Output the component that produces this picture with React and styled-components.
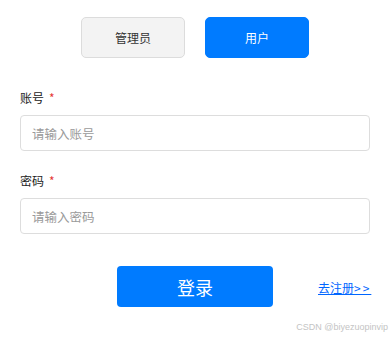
import React, { useState } from 'react';
import styled, { createGlobalStyle } from 'styled-components';

const GlobalStyle = createGlobalStyle`
  body {
    margin: 0;
    background: #fff;
    font-family: "Noto Sans CJK SC", "Noto Sans", sans-serif;
  }
`;

const Page = styled.div`
  position: relative;
  width: 390px;
  height: 339px;
  box-sizing: border-box;
  padding: 17px 20px 0;
`;

const RoleRow = styled.div`
  display: flex;
  justify-content: center;
  gap: 20px;
`;

const RoleButton = styled.button`
  width: 104px;
  height: 41px;
  border-radius: 5px;
  border: 1px solid ${p => (p.active ? '#007bff' : '#dcdcdc')};
  background: ${p => (p.active ? '#007bff' : '#f3f3f3')};
  color: ${p => (p.active ? '#fff' : '#333')};
  font-family: inherit;
  font-size: 12px;
  cursor: pointer;
`;

const Field = styled.div`
  margin-top: ${p => p.top}px;
`;

const Label = styled.div`
  font-size: 12px;
  line-height: 16px;
  color: #222;
  margin-bottom: 9px;
  span {
    color: #e53935;
    margin-left: 5px;
  }
`;

const Input = styled.input`
  display: block;
  width: 100%;
  height: 36px;
  box-sizing: border-box;
  border: 1px solid #dddddd;
  border-radius: 4px;
  padding: 0 11px;
  font-family: inherit;
  font-size: 12.5px;
  color: #333;
  outline: none;
  &::placeholder {
    color: #9a9a9a;
  }
`;

const ActionRow = styled.div`
  display: grid;
  grid-template-columns: minmax(0, 1fr) auto minmax(0, 1fr);
  align-items: center;
  margin-top: 32px;
`;

const LoginButton = styled.button`
  grid-column: 2;
  width: 156px;
  height: 41px;
  border: none;
  border-radius: 4px;
  background: #007bff;
  color: #fff;
  font-family: inherit;
  font-size: 18px;
  cursor: pointer;
`;

const RegisterLink = styled.a`
  justify-self: start;
  margin-left: 45px;
  margin-top: 2px;
  font-size: 12px;
  color: #0066ff;
  text-decoration: underline;
  cursor: pointer;
  white-space: nowrap;
  span {
    letter-spacing: 2px;
  }
`;

const Watermark = styled.div`
  position: absolute;
  right: 2px;
  bottom: 7px;
  font-family: "Liberation Sans", Arial, sans-serif;
  font-size: 9px;
  color: #c4c4c4;
`;

export default function App() {
  const [role, setRole] = useState('user');
  const [account, setAccount] = useState('');
  const [password, setPassword] = useState('');

  return (
    <Page>
      <GlobalStyle />
      <RoleRow>
        <RoleButton active={role === 'admin'} onClick={() => setRole('admin')}>管理员</RoleButton>
        <RoleButton active={role === 'user'} onClick={() => setRole('user')}>用户</RoleButton>
      </RoleRow>
      <Field top={32}>
        <Label>账号<span>*</span></Label>
        <Input
          placeholder="请输入账号"
          value={account}
          onChange={e => setAccount(e.target.value)}
        />
      </Field>
      <Field top={22}>
        <Label>密码<span>*</span></Label>
        <Input
          type="password"
          placeholder="请输入密码"
          value={password}
          onChange={e => setPassword(e.target.value)}
        />
      </Field>
      <ActionRow>
        <LoginButton>登录</LoginButton>
        <RegisterLink>去注册<span>&gt;&gt;</span></RegisterLink>
      </ActionRow>
      <Watermark>CSDN @biyezuopinvip</Watermark>
    </Page>
  );
}
